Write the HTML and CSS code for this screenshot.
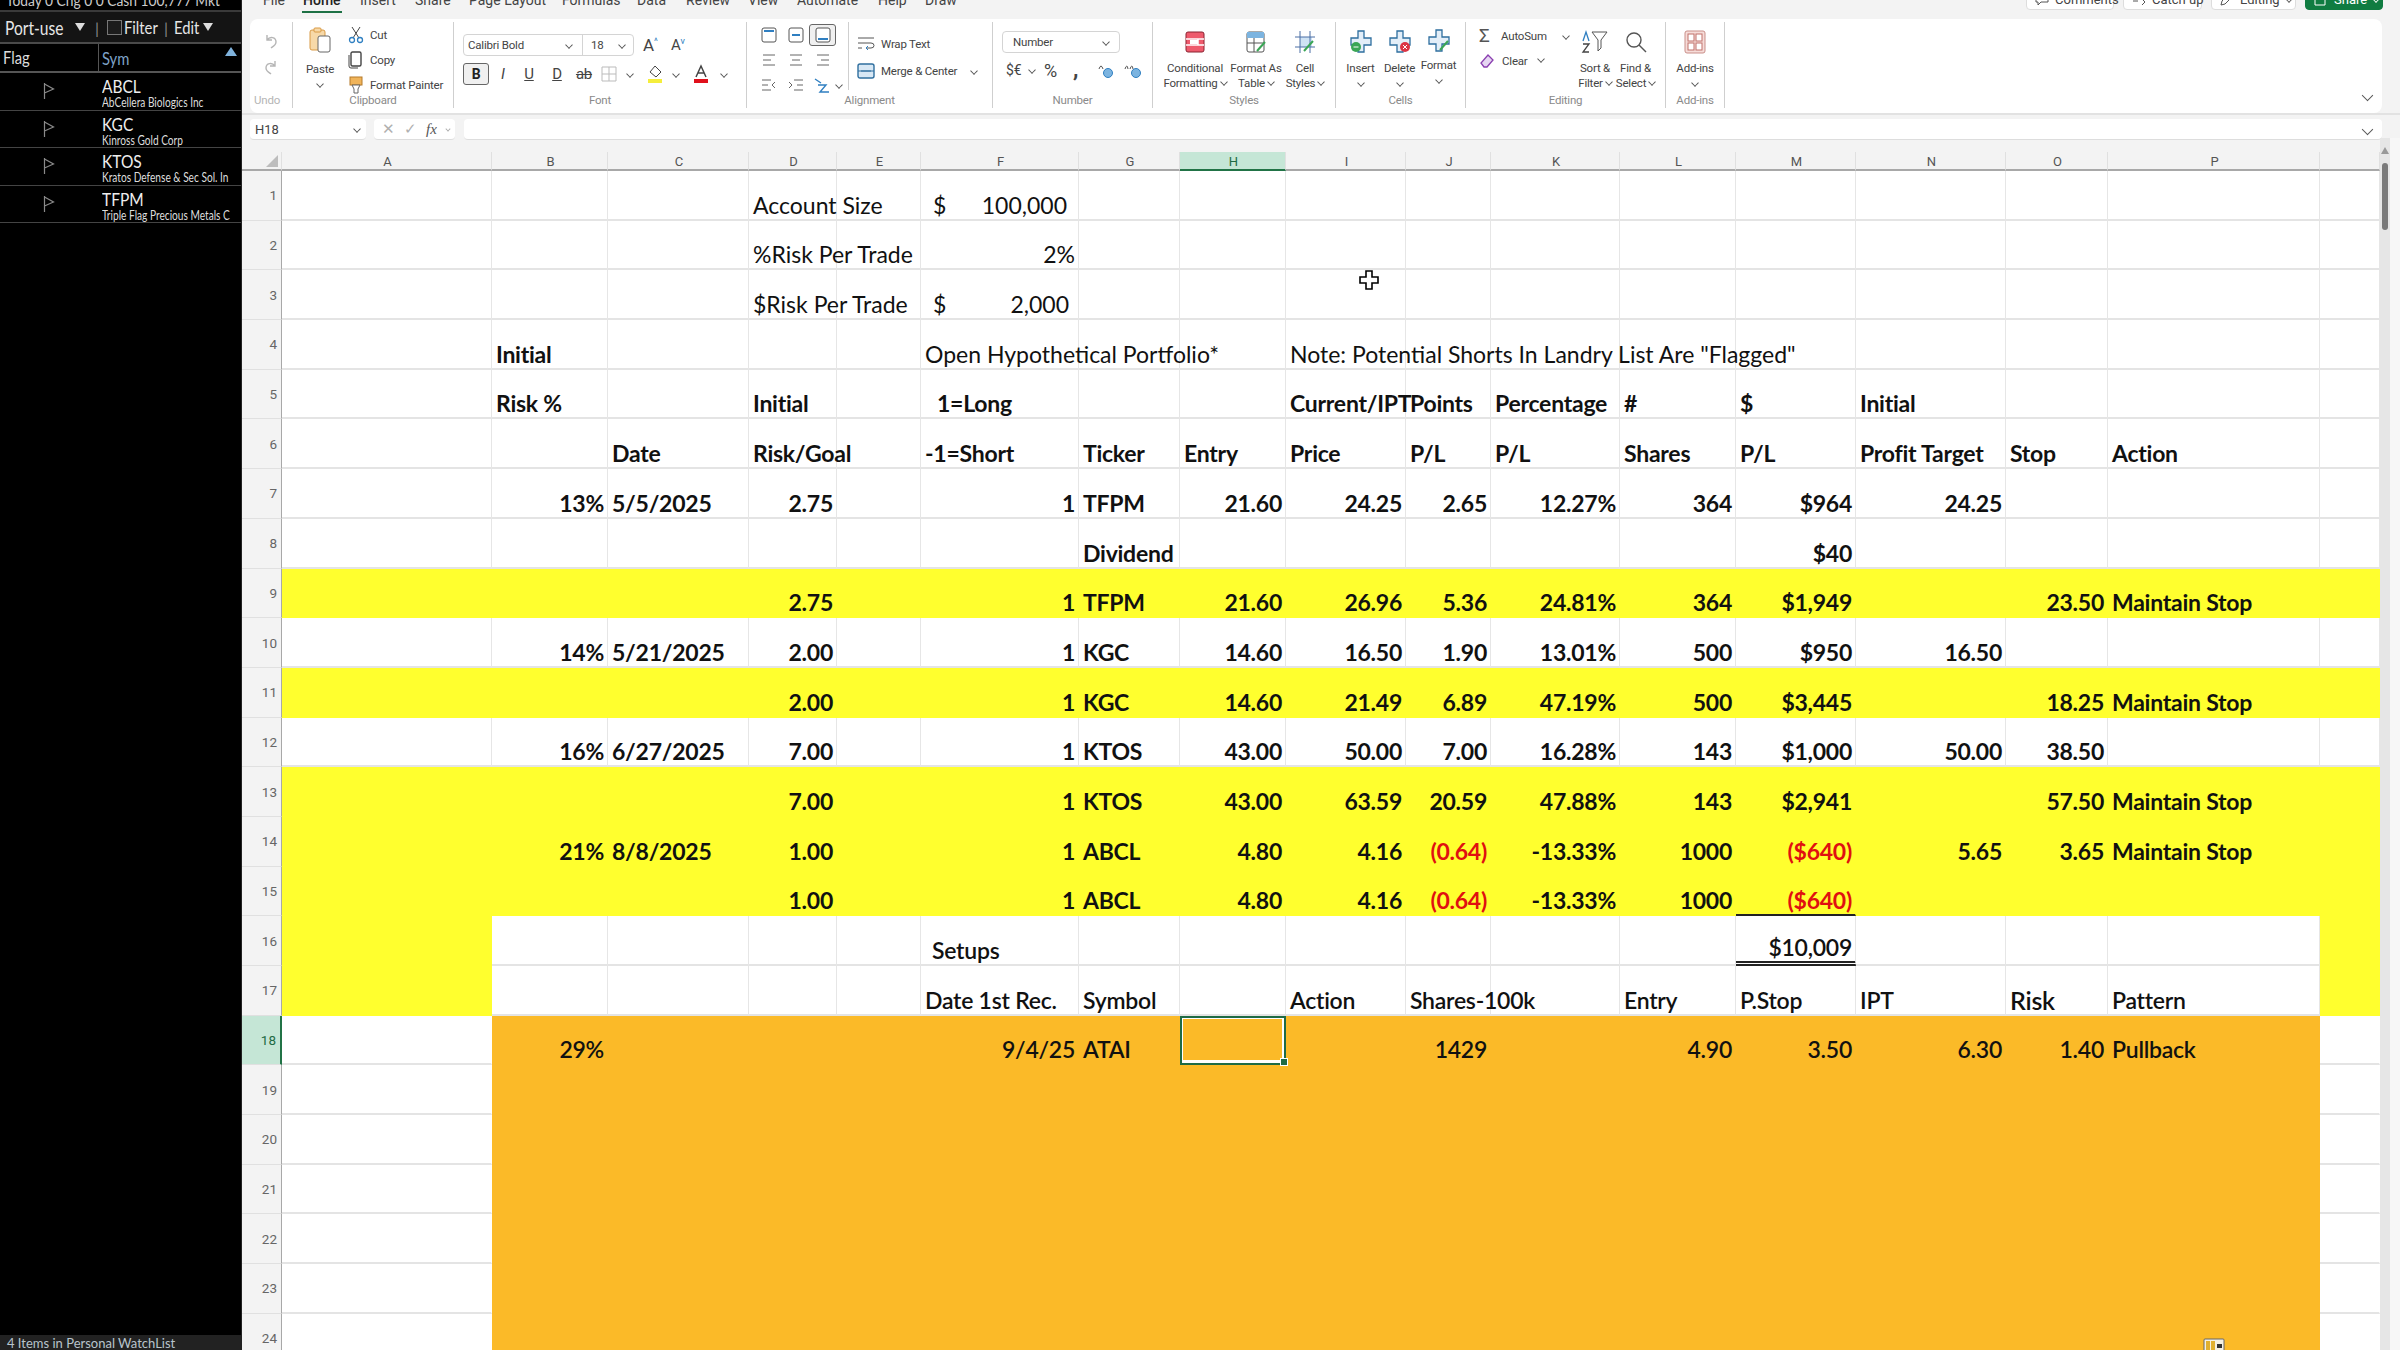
FILE: index.html
```html
<!DOCTYPE html>
<html lang="en">
<head>
    <meta charset="UTF-8">
    <title>Trading plan - Excel</title>
    <link rel="stylesheet" href="styles.css">
</head>
<body>
<div class="app">
    <!-- Watchlist -->
    <aside class="watch">
        <div class="watch-top"><span>Today 0 Chg 0 0 Cash 100,777 Mkt</span></div>
        <div class="watch-bar">
            <span class="wl-name"><span class="narrow">Port-use</span></span><i class="tri"></i>
            <span class="wl-sep">|</span>
            <i class="wl-check"></i><span class="wl-filter"><span class="narrow">Filter</span></span>
            <span class="wl-sep2">|</span>
            <span class="wl-edit"><span class="narrow">Edit</span></span><i class="tri"></i>
        </div>
        <div class="watch-head">
            <span class="wh-flag"><span class="narrow">Flag</span></span>
            <span class="wh-sym"><span class="narrow">Sym</span></span>
            <i class="sort-tri"></i>
        </div>
        <div class="watch-row">
            <div class="wr-flag"><svg width="12" height="18" viewBox="0 0 12 18"><path d="M1.5 1v16M1.5 2l9 5-9 4" fill="none" stroke="#8a8a8a" stroke-width="1.2"/></svg></div>
            <div class="wr-sym"><b>ABCL</b><small>AbCellera Biologics Inc</small></div>
        </div>
        <div class="watch-row">
            <div class="wr-flag"><svg width="12" height="18" viewBox="0 0 12 18"><path d="M1.5 1v16M1.5 2l9 5-9 4" fill="none" stroke="#8a8a8a" stroke-width="1.2"/></svg></div>
            <div class="wr-sym"><b>KGC</b><small>Kinross Gold Corp</small></div>
        </div>
        <div class="watch-row">
            <div class="wr-flag"><svg width="12" height="18" viewBox="0 0 12 18"><path d="M1.5 1v16M1.5 2l9 5-9 4" fill="none" stroke="#8a8a8a" stroke-width="1.2"/></svg></div>
            <div class="wr-sym"><b>KTOS</b><small>Kratos Defense &amp; Sec Sol. In</small></div>
        </div>
        <div class="watch-row">
            <div class="wr-flag"><svg width="12" height="18" viewBox="0 0 12 18"><path d="M1.5 1v16M1.5 2l9 5-9 4" fill="none" stroke="#8a8a8a" stroke-width="1.2"/></svg></div>
            <div class="wr-sym"><b>TFPM</b><small>Triple Flag Precious Metals C</small></div>
        </div>
        <div class="watch-status">4 Items in Personal WatchList</div>
    </aside>

    <main class="excel">
        <!-- Tabs -->
        <div class="tabs">
            <span class="tab t-file">File</span>
            <span class="tab t-home">Home</span>
            <span class="tab t-insert">Insert</span>
            <span class="tab t-share">Share</span>
            <span class="tab t-page">Page Layout</span>
            <span class="tab t-form">Formulas</span>
            <span class="tab t-data">Data</span>
            <span class="tab t-rev">Review</span>
            <span class="tab t-view">View</span>
            <span class="tab t-auto">Automate</span>
            <span class="tab t-help">Help</span>
            <span class="tab t-draw">Draw</span>
            <div class="top-btns">
                <span class="tbtn b-comments"><svg width="14" height="14" viewBox="0 0 14 14"><path d="M1 1h12v9H6l-3 3v-3H1z" fill="none" stroke="#555"/></svg>Comments</span>
                <span class="tbtn b-catch"><svg width="14" height="14" viewBox="0 0 14 14"><path d="M1 5h8M1 9h5M10 7l3 3-3 3" fill="none" stroke="#555"/></svg>Catch up</span>
                <span class="tbtn b-edit"><svg width="14" height="14" viewBox="0 0 14 14"><path d="M1 13l1-4 8-8 3 3-8 8z" fill="none" stroke="#555"/></svg>Editing<i class="chev"></i></span>
                <span class="tbtn b-share"><svg width="14" height="14" viewBox="0 0 14 14"><path d="M6 3H1v10h10V8M7 8l6-6M9 2h4v4" fill="none" stroke="#fff"/></svg>Share<i class="chev"></i></span>
            </div>
        </div>

        <!-- Ribbon -->
        <div class="ribbon">
            <section class="grp g-undo">
                <div class="grp-body undo-col">
                    <svg width="18" height="18" viewBox="0 0 18 18"><path d="M5 3v5h5M5 8c3-4 9-3 9 2 0 3-2 4-5 6" fill="none" stroke="#b5b5b5" stroke-width="1.4"/></svg>
                    <svg width="18" height="18" viewBox="0 0 18 18"><path d="M13 3v5H8M13 8c-3-4-9-3-9 2 0 3 2 4 5 6" fill="none" stroke="#b5b5b5" stroke-width="1.4"/></svg>
                </div>
                <div class="grp-label">Undo</div>
            </section>

            <section class="grp g-clip">
                <div class="grp-body clip-body">
                    <div class="tool paste">
                        <svg width="22" height="26" viewBox="0 0 22 26"><rect x="1" y="3" width="15" height="20" rx="2" fill="#f7d9a8" stroke="#d99a45"/><rect x="5" y="1" width="7" height="4" rx="1" fill="#f7d9a8" stroke="#d99a45"/><rect x="9" y="9" width="12" height="16" rx="2" fill="#fff" stroke="#666"/></svg>
                        <span class="tool-txt">Paste</span>
                        <i class="chev"></i>
                    </div>
                    <div class="clip-list">
                        <div class="line"><svg width="16" height="18" viewBox="0 0 16 18"><path d="M4 1l7 11M12 1L5 12" stroke="#444" fill="none"/><circle cx="4" cy="14" r="2.5" fill="none" stroke="#2f7fc1" stroke-width="1.3"/><circle cx="12" cy="14" r="2.5" fill="none" stroke="#2f7fc1" stroke-width="1.3"/></svg><span>Cut</span></div>
                        <div class="line"><svg width="16" height="18" viewBox="0 0 16 18"><rect x="3" y="1" width="10" height="14" rx="1.5" fill="#fff" stroke="#444" stroke-width="1.4"/><path d="M1 4v11q0 2 2 2h7" fill="none" stroke="#444"/></svg><span>Copy</span></div>
                        <div class="line"><svg width="16" height="18" viewBox="0 0 16 18"><rect x="2" y="1" width="12" height="8" fill="#f0b45a" stroke="#b57a2a"/><path d="M4 9h8l-2 4v4H6v-4z" fill="#fff" stroke="#666"/></svg><span>Format Painter</span></div>
                    </div>
                </div>
                <div class="grp-label">Clipboard</div>
            </section>

            <section class="grp g-font">
                <div class="grp-body font-body">
                    <div class="font-row1">
                        <div class="combo font-combo"><span class="font-name">Calibri Bold</span><i class="chev"></i><span class="font-sep"></span><span class="font-size">18</span><i class="chev"></i></div>
                        <span class="grow-a">A<sup>^</sup></span>
                        <span class="shrink-a">A<sup>v</sup></span>
                    </div>
                    <div class="font-row2">
                        <span class="fmt-btn"><b>B</b></span>
                        <span class="fmt f-i"><i>I</i></span>
                        <span class="fmt f-u"><u>U</u></span>
                        <span class="fmt f-d"><u>D</u></span>
                        <span class="fmt f-s"><s>ab</s></span>
                        <svg class="f-b" width="18" height="18" viewBox="0 0 18 18"><path d="M2 2h14v14H2zM9 2v14M2 9h14" fill="none" stroke="#bbb"/></svg>
                        <i class="chev f-c1"></i>
                        <svg class="f-fill" width="18" height="20" viewBox="0 0 18 20"><path d="M9 2l6 6-5 5-6-5z" fill="#fff" stroke="#444"/><rect x="2" y="15" width="14" height="4" fill="#f5ee3c"/></svg>
                        <i class="chev f-c2"></i>
                        <svg class="f-color" width="18" height="20" viewBox="0 0 18 20"><path d="M4 13L9 2l5 11M6 9h6" fill="none" stroke="#444" stroke-width="1.5"/><rect x="2" y="15" width="14" height="4" fill="#e0101c"/></svg>
                        <i class="chev f-c3"></i>
                    </div>
                </div>
                <div class="grp-label">Font</div>
            </section>

            <section class="grp g-align">
                <div class="grp-body align-body">
                    <div class="align-grid">
                        <span class="ai"><svg width="18" height="18" viewBox="0 0 18 18"><rect x="2" y="2" width="14" height="14" rx="2" fill="#fff" stroke="#555"/><path d="M4 5h10" stroke="#2f7fc1" stroke-width="2"/></svg></span>
                        <span class="ai"><svg width="18" height="18" viewBox="0 0 18 18"><rect x="2" y="2" width="14" height="14" rx="2" fill="#fff" stroke="#555"/><path d="M5 9h8" stroke="#2f7fc1" stroke-width="2"/></svg></span>
                        <span class="ai ai-on"><svg width="18" height="18" viewBox="0 0 18 18"><rect x="2" y="2" width="14" height="14" rx="2" fill="#fff" stroke="#555"/><path d="M4 13h10" stroke="#2f7fc1" stroke-width="2"/></svg></span>
                        <span class="ai"><svg width="16" height="14" viewBox="0 0 16 14"><path d="M2 2h12M2 7h8M2 12h12" stroke="#666"/></svg></span>
                        <span class="ai"><svg width="16" height="14" viewBox="0 0 16 14"><path d="M2 2h12M4 7h8M2 12h12" stroke="#666"/></svg></span>
                        <span class="ai"><svg width="16" height="14" viewBox="0 0 16 14"><path d="M2 2h12M6 7h8M2 12h12" stroke="#666"/></svg></span>
                        <span class="ai"><svg width="16" height="14" viewBox="0 0 16 14"><path d="M1 2h9M1 7h6M1 12h9M14 4l-3 3 3 3" fill="none" stroke="#666"/></svg></span>
                        <span class="ai"><svg width="16" height="14" viewBox="0 0 16 14"><path d="M6 2h9M9 7h6M6 12h9M1 4l3 3-3 3" fill="none" stroke="#666"/></svg></span>
                        <span class="ai ai-ori"><svg width="18" height="18" viewBox="0 0 18 18"><path d="M2 3l6 4M5 9l8 0-6 7h9" fill="none" stroke="#2f7fc1" stroke-width="1.4"/></svg><i class="chev"></i></span>
                    </div>
                    <div class="align-wrap">
                        <div class="line"><svg width="18" height="16" viewBox="0 0 18 16"><path d="M1 2h16M1 7h13q3 0 3 2.5T14 12H9M1 12h4" fill="none" stroke="#555"/><path d="M11 10l-2 2 2 2" fill="none" stroke="#2f7fc1"/></svg><span>Wrap Text</span></div>
                        <div class="line"><svg width="18" height="18" viewBox="0 0 18 18"><rect x="1" y="2" width="16" height="14" rx="2" fill="#d8e8f5" stroke="#2f6f9f" stroke-width="1.4"/><path d="M1 9h16M4 9h10" stroke="#2f6f9f"/></svg><span>Merge &amp; Center</span><i class="chev merge-chev"></i></div>
                    </div>
                </div>
                <div class="grp-label">Alignment</div>
            </section>

            <section class="grp g-num">
                <div class="grp-body num-body">
                    <div class="combo num-combo"><span>Number</span><i class="chev"></i></div>
                    <div class="num-row">
                        <span class="n-cur">$€</span><i class="chev n-ch"></i>
                        <span class="n-pct">%</span>
                        <span class="n-com">,</span>
                        <svg class="n-inc" width="18" height="18" viewBox="0 0 18 18"><path d="M2 8q2-6 4 0" fill="none" stroke="#555"/><circle cx="11" cy="12" r="4.5" fill="#7cb4e0" stroke="#2f7fc1"/></svg>
                        <svg class="n-dec" width="18" height="18" viewBox="0 0 18 18"><path d="M1 8q2-6 3 0M6 8q2-6 3 0" fill="none" stroke="#555"/><circle cx="12" cy="12" r="4.5" fill="#7cb4e0" stroke="#2f7fc1"/></svg>
                    </div>
                </div>
                <div class="grp-label">Number</div>
            </section>

            <section class="grp g-styles">
                <div class="grp-body tools">
                    <div class="tool w-cond">
                        <svg width="22" height="24" viewBox="0 0 22 24"><rect x="2" y="2" width="18" height="20" rx="2" fill="#ee5a6c" stroke="#8a2230"/><path d="M2 9h18M2 15h18M14 9v6" stroke="#fff" stroke-width="1.5"/><rect x="6" y="10" width="8" height="4" fill="#fff"/></svg>
                        <span class="tool-txt">Conditional</span>
                        <span class="tool-txt">Formatting<i class="chev in"></i></span>
                    </div>
                    <div class="tool w-fat">
                        <svg width="22" height="24" viewBox="0 0 22 24"><rect x="2" y="2" width="17" height="20" rx="2" fill="#fff" stroke="#555"/><rect x="2" y="2" width="17" height="6" fill="#7cb4e0"/><path d="M2 13h17M9 8v14" stroke="#555"/><path d="M12 21l8-9" stroke="#3aa655" stroke-width="2"/></svg>
                        <span class="tool-txt">Format As</span>
                        <span class="tool-txt">Table<i class="chev in"></i></span>
                    </div>
                    <div class="tool w-cell">
                        <svg width="22" height="24" viewBox="0 0 22 24"><rect x="6" y="7" width="12" height="10" fill="#cfe3f4"/><path d="M6 1v22M16 1v22M1 7h20M1 17h20" stroke="#4a6fa5" fill="none"/><path d="M10 21l9-10" stroke="#3aa655" stroke-width="2"/></svg>
                        <span class="tool-txt">Cell</span>
                        <span class="tool-txt">Styles<i class="chev in"></i></span>
                    </div>
                </div>
                <div class="grp-label">Styles</div>
            </section>

            <section class="grp g-cells">
                <div class="grp-body tools">
                    <div class="tool w-c">
                        <svg width="24" height="24" viewBox="0 0 24 24"><path d="M9 1h6v7h7v7h-7v7H9v-7H2V8h7z" fill="#e3eef8" stroke="#2f6f9f" stroke-width="1.3"/><circle cx="7" cy="17" r="5" fill="#3aa655"/><path d="M4.5 17h5" stroke="#fff"/></svg>
                        <span class="tool-txt">Insert</span>
                        <i class="chev"></i>
                    </div>
                    <div class="tool w-c">
                        <svg width="24" height="24" viewBox="0 0 24 24"><path d="M9 1h6v7h7v7h-7v7H9v-7H2V8h7z" fill="#e3eef8" stroke="#2f6f9f" stroke-width="1.3"/><circle cx="17" cy="17" r="5" fill="#dc3545"/><path d="M15 15l4 4M19 15l-4 4" stroke="#fff"/></svg>
                        <span class="tool-txt">Delete</span>
                        <i class="chev"></i>
                    </div>
                    <div class="tool w-c tool-up">
                        <svg width="24" height="24" viewBox="0 0 24 24"><path d="M9 1h6v7h7v7h-7v7H9v-7H2V8h7z" fill="#e3eef8" stroke="#2f6f9f" stroke-width="1.3"/><path d="M13 21l8-9" stroke="#3aa655" stroke-width="2"/></svg>
                        <span class="tool-txt">Format</span>
                        <i class="chev"></i>
                    </div>
                </div>
                <div class="grp-label">Cells</div>
            </section>

            <section class="grp g-edit">
                <div class="grp-body tools">
                    <div class="edit-list">
                        <div class="line"><span class="sigma">Σ</span><span>AutoSum</span><i class="chev sum-chev"></i></div>
                        <div class="line"><svg width="16" height="16" viewBox="0 0 16 16"><path d="M9 2l5 5-6 7H5L2 10z" fill="#e6d6f2" stroke="#8a3fb0" stroke-width="1.3"/></svg><span>Clear</span><i class="chev in"></i></div>
                    </div>
                    <div class="tool w-sort">
                        <svg width="28" height="24" viewBox="0 0 28 24"><path d="M11 2h15l-6 8v8l-3 3v-11z" fill="#fff" stroke="#555"/><path d="M2 11l3-9 3 9" fill="none" stroke="#2f7fc1" stroke-width="1.3"/><path d="M2 14h6l-6 8h6" fill="none" stroke="#444" stroke-width="1.3"/></svg>
                        <span class="tool-txt">Sort &amp;</span>
                        <span class="tool-txt">Filter<i class="chev in"></i></span>
                    </div>
                    <div class="tool w-find">
                        <svg width="24" height="24" viewBox="0 0 24 24"><circle cx="10" cy="10" r="7" fill="none" stroke="#555" stroke-width="1.4"/><path d="M15 15l7 7" stroke="#555" stroke-width="1.4"/></svg>
                        <span class="tool-txt">Find &amp;</span>
                        <span class="tool-txt">Select<i class="chev in"></i></span>
                    </div>
                </div>
                <div class="grp-label">Editing</div>
            </section>

            <section class="grp g-add">
                <div class="grp-body tools">
                    <div class="tool w-add">
                        <svg width="22" height="24" viewBox="0 0 22 24"><rect x="1" y="1" width="20" height="22" rx="2" fill="#f6dcd9" stroke="#c98f89"/><rect x="4" y="4" width="6" height="7" fill="#fff" stroke="#c0706a"/><rect x="12" y="4" width="6" height="7" fill="#fff" stroke="#c0706a"/><rect x="4" y="13" width="6" height="7" fill="#fff" stroke="#c0706a"/><rect x="12" y="13" width="6" height="7" fill="#fff" stroke="#c0706a"/></svg>
                        <span class="tool-txt">Add-ins</span>
                        <i class="chev"></i>
                    </div>
                </div>
                <div class="grp-label">Add-ins</div>
            </section>

            <div class="ribbon-end"><i class="chev big"></i></div>
        </div>

        <!-- Formula bar -->
        <div class="formula">
            <div class="name-box"><span>H18</span><i class="chev"></i></div>
            <div class="fx-box"><span class="fx-x">✕</span><span class="fx-ok">✓</span><span class="fx-f"><i>fx</i></span><i class="chev tiny"></i></div>
            <div class="fx-input"><i class="chev big"></i></div>
        </div>

        <!-- Sheet -->
        <div class="sheet">
            <div class="grid-wrap">
                <table class="grid">
                    <colgroup>
                        <col class="c-rh"><col class="c-a"><col class="c-b"><col class="c-c"><col class="c-d"><col class="c-e"><col class="c-f"><col class="c-g"><col class="c-h"><col class="c-i"><col class="c-j"><col class="c-k"><col class="c-l"><col class="c-m"><col class="c-n"><col class="c-o"><col class="c-p"><col class="c-q">
                    </colgroup>
                    <thead>
                        <tr><th class="corner"><i></i></th><th>A</th><th>B</th><th>C</th><th>D</th><th>E</th><th>F</th><th>G</th><th class="on">H</th><th>I</th><th>J</th><th>K</th><th>L</th><th>M</th><th>N</th><th>O</th><th>P</th><th></th></tr>
                    </thead>
                    <tbody>
                        <tr class="reg"><th>1</th><td></td><td></td><td></td><td>Account Size</td><td></td><td class="r acct"><span class="cur">$</span>100,000</td><td></td><td></td><td></td><td></td><td></td><td></td><td></td><td></td><td></td><td></td><td></td></tr>
                        <tr class="reg"><th>2</th><td></td><td></td><td></td><td>%Risk Per Trade</td><td></td><td class="r">2%</td><td></td><td></td><td></td><td></td><td></td><td></td><td></td><td></td><td></td><td></td><td></td></tr>
                        <tr class="reg"><th>3</th><td></td><td></td><td></td><td>$Risk Per Trade</td><td></td><td class="r acct2"><span class="cur">$</span>2,000</td><td></td><td></td><td></td><td></td><td></td><td></td><td></td><td></td><td></td><td></td><td></td></tr>
                        <tr><th>4</th><td></td><td>Initial</td><td></td><td></td><td></td><td class="n">Open Hypothetical Portfolio*</td><td></td><td></td><td class="n">Note: Potential Shorts In Landry List Are "Flagged"</td><td></td><td></td><td></td><td></td><td></td><td></td><td></td><td></td></tr>
                        <tr><th>5</th><td></td><td>Risk %</td><td></td><td>Initial</td><td></td><td class="ind">1=Long</td><td></td><td></td><td>Current/IPT</td><td>Points</td><td>Percentage</td><td>#</td><td>$</td><td>Initial</td><td></td><td></td><td></td></tr>
                        <tr><th>6</th><td></td><td></td><td>Date</td><td>Risk/Goal</td><td></td><td>-1=Short</td><td>Ticker</td><td>Entry</td><td>Price</td><td>P/L</td><td>P/L</td><td>Shares</td><td>P/L</td><td>Profit Target</td><td>Stop</td><td>Action</td><td></td></tr>
                        <tr><th>7</th><td></td><td class="r">13%</td><td>5/5/2025</td><td class="r">2.75</td><td></td><td class="r">1</td><td>TFPM</td><td class="r">21.60</td><td class="r">24.25</td><td class="r">2.65</td><td class="r">12.27%</td><td class="r">364</td><td class="r">$964</td><td class="r">24.25</td><td></td><td></td><td></td></tr>
                        <tr><th>8</th><td></td><td></td><td></td><td></td><td></td><td></td><td>Dividend</td><td></td><td></td><td></td><td></td><td></td><td class="r">$40</td><td></td><td></td><td></td><td></td></tr>
                        <tr class="yl"><th>9</th><td></td><td></td><td></td><td class="r">2.75</td><td></td><td class="r">1</td><td>TFPM</td><td class="r">21.60</td><td class="r">26.96</td><td class="r">5.36</td><td class="r">24.81%</td><td class="r">364</td><td class="r">$1,949</td><td></td><td class="r">23.50</td><td>Maintain Stop</td><td></td></tr>
                        <tr><th>10</th><td></td><td class="r">14%</td><td>5/21/2025</td><td class="r">2.00</td><td></td><td class="r">1</td><td>KGC</td><td class="r">14.60</td><td class="r">16.50</td><td class="r">1.90</td><td class="r">13.01%</td><td class="r">500</td><td class="r">$950</td><td class="r">16.50</td><td></td><td></td><td></td></tr>
                        <tr class="yl"><th>11</th><td></td><td></td><td></td><td class="r">2.00</td><td></td><td class="r">1</td><td>KGC</td><td class="r">14.60</td><td class="r">21.49</td><td class="r">6.89</td><td class="r">47.19%</td><td class="r">500</td><td class="r">$3,445</td><td></td><td class="r">18.25</td><td>Maintain Stop</td><td></td></tr>
                        <tr><th>12</th><td></td><td class="r">16%</td><td>6/27/2025</td><td class="r">7.00</td><td></td><td class="r">1</td><td>KTOS</td><td class="r">43.00</td><td class="r">50.00</td><td class="r">7.00</td><td class="r">16.28%</td><td class="r">143</td><td class="r">$1,000</td><td class="r">50.00</td><td class="r">38.50</td><td></td><td></td></tr>
                        <tr class="yl"><th>13</th><td></td><td></td><td></td><td class="r">7.00</td><td></td><td class="r">1</td><td>KTOS</td><td class="r">43.00</td><td class="r">63.59</td><td class="r">20.59</td><td class="r">47.88%</td><td class="r">143</td><td class="r">$2,941</td><td></td><td class="r">57.50</td><td>Maintain Stop</td><td></td></tr>
                        <tr class="yl"><th>14</th><td></td><td class="r">21%</td><td>8/8/2025</td><td class="r">1.00</td><td></td><td class="r">1</td><td>ABCL</td><td class="r">4.80</td><td class="r">4.16</td><td class="r red">(0.64)</td><td class="r">-13.33%</td><td class="r">1000</td><td class="r red">($640)</td><td class="r">5.65</td><td class="r">3.65</td><td>Maintain Stop</td><td></td></tr>
                        <tr class="yl"><th>15</th><td></td><td></td><td></td><td class="r">1.00</td><td></td><td class="r">1</td><td>ABCL</td><td class="r">4.80</td><td class="r">4.16</td><td class="r red">(0.64)</td><td class="r">-13.33%</td><td class="r">1000</td><td class="r red line-b">($640)</td><td></td><td></td><td></td><td></td></tr>
                        <tr class="setup"><th>16</th><td class="fy"></td><td></td><td></td><td></td><td></td><td class="ind2">Setups</td><td></td><td></td><td></td><td></td><td></td><td></td><td class="r dbl-b">$10,009</td><td></td><td></td><td></td><td class="fy"></td></tr>
                        <tr class="setup"><th>17</th><td class="fy"></td><td></td><td></td><td></td><td></td><td>Date 1st Rec.</td><td>Symbol</td><td></td><td>Action</td><td>Shares-100k</td><td></td><td>Entry</td><td>P.Stop</td><td>IPT</td><td class="big-t">Risk</td><td>Pattern</td><td class="fy"></td></tr>
                        <tr class="or setup"><th class="on">18</th><td></td><td class="r">29%</td><td></td><td></td><td></td><td class="r">9/4/25</td><td>ATAI</td><td class="sel"></td><td></td><td class="r">1429</td><td></td><td class="r">4.90</td><td class="r">3.50</td><td class="r">6.30</td><td class="r">1.40</td><td>Pullback</td><td></td></tr>
                        <tr class="or"><th>19</th><td></td><td></td><td></td><td></td><td></td><td></td><td></td><td></td><td></td><td></td><td></td><td></td><td></td><td></td><td></td><td></td><td></td></tr>
                        <tr class="or"><th>20</th><td></td><td></td><td></td><td></td><td></td><td></td><td></td><td></td><td></td><td></td><td></td><td></td><td></td><td></td><td></td><td></td><td></td></tr>
                        <tr class="or"><th>21</th><td></td><td></td><td></td><td></td><td></td><td></td><td></td><td></td><td></td><td></td><td></td><td></td><td></td><td></td><td></td><td></td><td></td></tr>
                        <tr class="or"><th>22</th><td></td><td></td><td></td><td></td><td></td><td></td><td></td><td></td><td></td><td></td><td></td><td></td><td></td><td></td><td></td><td></td><td></td></tr>
                        <tr class="or"><th>23</th><td></td><td></td><td></td><td></td><td></td><td></td><td></td><td></td><td></td><td></td><td></td><td></td><td></td><td></td><td></td><td></td><td></td></tr>
                        <tr class="or"><th>24</th><td></td><td></td><td></td><td></td><td></td><td></td><td></td><td></td><td></td><td></td><td></td><td></td><td></td><td></td><td></td><td></td><td></td></tr>
                    </tbody>
                </table>
                <!-- mouse pointer and the quick analysis tag lie over the grid -->
                <svg class="pointer" width="22" height="22" viewBox="0 0 22 22"><path d="M8 2h6v6h6v6h-6v6H8v-6H2V8h6z" fill="#fff" stroke="#000" stroke-width="1.6"/></svg>
                <svg class="quick" width="22" height="14" viewBox="0 0 22 14"><rect x="1" y="1" width="20" height="14" rx="1" fill="#f4f0e2" stroke="#666"/><rect x="3" y="3" width="4" height="11" fill="#e0b030"/><rect x="8" y="3" width="4" height="11" fill="#e0b030"/><rect x="14" y="6" width="5" height="4" fill="#333"/></svg>
            </div>
            <div class="vscroll"><i class="up"></i><i class="thumb"></i></div>
        </div>
    </main>
</div>
</body>
</html>
```

FILE: styles.css
```css
/* Reset */
* {
    margin: 0;
    padding: 0;
    box-sizing: border-box;
}

html, body {
    width: 2400px;
    height: 1350px;
    overflow: hidden;
    background: #000;
}

body {
    font-family: 'Roboto', 'Liberation Sans', sans-serif;
    color: #444;
}

.app {
    display: flex;
    height: 1350px;
}

/* Watchlist panel */
.watch {
    width: 242px;
    height: 1350px;
    flex: none;
    background: #000;
    color: #ddd;
    display: flex;
    flex-direction: column;
    font-family: 'Lato', sans-serif;
    border-right: 1px solid #222;
}

/* the trading app draws its text tall and narrow */
.narrow {
    display: inline-block;
    white-space: nowrap;
    transform: scaleX(.82);
    transform-origin: left center;
}

.watch-top {
    height: 10px;
    font-size: 15px;
    line-height: 0;
    padding-left: 6px;
    white-space: nowrap;
    overflow: hidden;
    color: #ccc;
}

.watch-top span {
    display: inline-block;
    transform: scaleX(.92);
    transform-origin: left center;
}

.watch-bar {
    height: 34px;
    display: flex;
    align-items: center;
    background: #141414;
    border-top: 2px solid #3a3a3a;
    border-bottom: 2px solid #4a4a4a;
    padding-left: 5px;
    font-size: 19px;
    color: #e6e6e6;
}

.wl-name { width: 70px; flex: none; }
.tri {
    width: 0;
    height: 0;
    flex: none;
    border-left: 5px solid transparent;
    border-right: 5px solid transparent;
    border-top: 8px solid #ddd;
}

.wl-sep { margin-left: 10px; color: #888; font-size: 16px; }
.wl-check {
    width: 15px;
    height: 15px;
    flex: none;
    border: 1px solid #777;
    background: #1c1c1c;
    margin-left: 8px;
}
.wl-filter { margin-left: 2px; font-size: 18px; width: 36px; flex: none; }
.wl-sep2 { margin-left: 4px; color: #888; font-size: 16px; }
.wl-edit { margin-left: 6px; width: 29px; font-size: 18px; flex: none; }

.watch-head {
    height: 29px;
    display: flex;
    align-items: center;
    position: relative;
    border-bottom: 2px solid #555;
    font-size: 18px;
}

.wh-flag { width: 99px; flex: none; padding-left: 3px; height: 100%; line-height: 27px; border-right: 1px solid #555; }
.wh-sym { padding-left: 3px; color: #7fa3c8; }

.sort-tri {
    position: absolute;
    right: 4px;
    top: 3px;
    width: 0;
    height: 0;
    border-left: 6px solid transparent;
    border-right: 6px solid transparent;
    border-bottom: 9px solid #7fb2dc;
}

.watch-row {
    height: 37.5px;
    display: flex;
    border-bottom: 1px solid #444;
    flex: none;
}

.wr-flag { width: 99px; flex: none; padding: 9px 0 0 43px; }

.wr-sym {
    padding-left: 3px;
    display: flex;
    flex-direction: column;
    align-items: flex-start;
    white-space: nowrap;
}

.wr-sym b {
    font-weight: 400;
    font-size: 18px;
    line-height: 20px;
    margin-top: 3px;
    color: #eee;
    transform: scaleX(.86);
    transform-origin: left center;
}

.wr-sym small {
    font-size: 13px;
    line-height: 12px;
    color: #ddd;
    transform: scaleX(.78);
    transform-origin: left center;
}

.watch-status {
    margin-top: auto;
    height: 15px;
    background: #222;
    font-size: 13px;
    line-height: 16px;
    padding-left: 7px;
    color: #b8c4cc;
}

/* Excel */
.excel {
    flex: 1;
    min-width: 0;
    background: #f3f3f3;
    display: flex;
    flex-direction: column;
}

.tabs {
    height: 19px;
    flex: none;
    position: relative;
    overflow: hidden;
    font-size: 14px;
    color: #444;
}

.tab {
    position: absolute;
    top: -9px;
    line-height: 18px;
    white-space: nowrap;
}

.t-file { left: 21px; }
.t-home { left: 61px; color: #222; font-weight: 500; }
.t-home::after {
    content: "";
    position: absolute;
    left: -1px;
    right: -1px;
    top: 20px;
    height: 2px;
    background: #1e7145;
}
.t-insert { left: 118px; }
.t-share { left: 173px; }
.t-page { left: 227px; }
.t-form { left: 320px; }
.t-data { left: 395px; }
.t-rev { left: 444px; }
.t-view { left: 506px; }
.t-auto { left: 555px; }
.t-help { left: 636px; }
.t-draw { left: 683px; }

.top-btns {
    position: absolute;
    top: -12px;
    left: 1784px;
    display: flex;
    gap: 9px;
}

.tbtn {
    height: 22px;
    background: #fff;
    border: 1px solid #ddd;
    border-radius: 4px;
    display: flex;
    align-items: center;
    gap: 6px;
    padding-left: 8px;
    font-size: 13px;
    white-space: nowrap;
}
.tbtn svg { flex: none; }
.b-comments { width: 88px; }
.b-catch { width: 79px; }
.b-edit { width: 85px; }
.b-share { width: 78px; background: #107c41; border-color: #107c41; color: #fff; }
.b-share .chev { border-color: #fff; }

.ribbon {
    height: 94px;
    flex: none;
    margin: 0 18px 0 8px;
    background: #fff;
    border-radius: 8px;
    display: flex;
    padding-top: 3px;
    font-size: 11.5px;
    letter-spacing: -.2px;
    color: #444;
}

.grp {
    flex: none;
    height: 86px;
    border-right: 1px solid #cfcfcf;
    display: flex;
    flex-direction: column;
}

.grp-body { height: 71px; flex: none; }

.grp-label {
    text-align: center;
    font-size: 11.5px;
    line-height: 15px;
    color: #8a8a8a;
}

.g-undo { width: 43px; }
.g-clip { width: 161px; }
.g-font { width: 293px; }
.g-align { width: 246px; }
.g-num { width: 160px; }
.g-styles { width: 183px; }
.g-cells { width: 130px; }
.g-edit { width: 200px; }
.g-add { width: 59px; }

.g-undo .grp-label { padding-right: 8px; color: #b5b5b5; }

.ribbon-end {
    flex: 1;
    display: flex;
    justify-content: flex-end;
    align-items: flex-end;
    padding: 0 10px 13px 0;
}

/* small chevrons built from borders */
.chev {
    display: inline-block;
    width: 6px;
    height: 6px;
    border-right: 1.4px solid #555;
    border-bottom: 1.4px solid #555;
    transform: rotate(45deg) scale(.9);
    flex: none;
}
.chev.in { margin-left: 3px; position: relative; top: -2px; }
.chev.big { width: 9px; height: 9px; }
.chev.tiny { width: 4px; height: 4px; border-color: #aaa; }

.undo-col {
    display: flex;
    flex-direction: column;
    align-items: center;
    gap: 8px;
    padding-top: 10px;
}

.tool {
    display: flex;
    flex-direction: column;
    align-items: center;
    white-space: nowrap;
}

.tool svg { height: 26px; margin-top: 7px; margin-bottom: 6px; }
.tool-txt { line-height: 15px; }
.tool > .chev { margin-top: 4px; }
.tool-up { margin-top: -1px; }
.tool-up .tool-txt { margin-top: -2px; }

.clip-body { display: flex; padding-left: 13px; }
.paste { width: 28px; margin-right: 14px; }
.paste svg { margin-bottom: 9px; margin-top: 5px; }

.line {
    display: flex;
    align-items: center;
    gap: 6px;
    height: 25px;
    white-space: nowrap;
}

.font-body { padding-left: 9px; }

.font-row1 {
    display: flex;
    align-items: center;
    height: 37px;
    padding-top: 8px;
}

.combo {
    height: 22px;
    background: #fff;
    border: 1px solid #d4d4d4;
    border-radius: 4px;
    display: flex;
    align-items: center;
}

.font-combo { width: 171px; padding-left: 4px; flex: none; }
.font-name { width: 98px; }
.font-sep { width: 1px; height: 20px; background: #d4d4d4; margin-left: 10px; }
.font-size { margin-left: 8px; width: 28px; }
.grow-a { margin-left: 9px; font-size: 17px; width: 28px; }
.shrink-a { font-size: 15px; }
.grow-a sup, .shrink-a sup { font-size: 9px; color: #2f7fc1; }

.font-row2 {
    display: flex;
    align-items: center;
    height: 26px;
    margin-top: 2px;
}

.fmt-btn {
    width: 26px;
    height: 22px;
    border: 1px solid #666;
    border-radius: 3px;
    background: #f0f0f0;
    text-align: center;
    line-height: 20px;
    font-size: 14px;
    color: #222;
}

.fmt { font-size: 15px; text-align: center; width: 20px; }
.f-i { margin-left: 4px; }
.f-u { margin-left: 6px; }
.f-d { margin-left: 8px; }
.f-s { margin-left: 7px; }
.f-b { margin-left: 6px; }
.f-c1 { margin-left: 9px; }
.f-fill { margin-left: 13px; }
.f-c2 { margin-left: 9px; }
.f-color { margin-left: 13px; }
.f-c3 { margin-left: 11px; }

.align-body { display: flex; }

.align-grid {
    width: 102px;
    height: 68px;
    display: grid;
    grid-template-columns: 27px 27px 27px;
    grid-auto-rows: 25px;
    padding-left: 8px;
    flex: none;
    border-right: 1px solid #cfcfcf;
    align-items: center;
}

.ai { display: flex; align-items: center; justify-content: center; height: 22px; }
.ai-on { border: 1px solid #666; border-radius: 3px; background: #f0f0f0; }
.ai-ori { gap: 5px; justify-content: flex-start; padding-left: 4px; width: 40px; }

.align-wrap { padding: 8px 0 0 8px; }
.align-wrap .line { height: 27px; }
.merge-chev { margin-left: 8px; }

.num-body { padding: 9px 0 0 9px; }
.num-combo { width: 118px; padding: 0 10px; justify-content: space-between; }

.num-row {
    display: flex;
    align-items: center;
    height: 30px;
    margin-top: 2px;
}

.n-cur { font-size: 14px; margin-left: 4px; width: 20px; }
.n-ch { margin-left: 3px; }
.n-pct { font-size: 18px; margin-left: 9px; }
.n-com { font-size: 22px; font-weight: 700; margin-left: 16px; width: 18px; line-height: 16px; }
.n-inc { margin-left: 6px; }
.n-dec { margin-left: 9px; }

.tools { display: flex; }
.g-styles .tools { padding-left: 3px; }
.w-cond { width: 78px; }
.w-fat { width: 44px; }
.w-cell { width: 54px; }
.g-cells .tools { padding-left: 5px; }
.w-c { width: 39px; }
.edit-list { width: 109px; padding: 1px 0 0 13px; }
.edit-list .line { gap: 7px; }
.sigma { font-size: 19px; color: #555; width: 15px; }
.sum-chev { margin-left: 9px; }
.w-sort { width: 40px; }
.w-find { width: 41px; }
.w-add { width: 58px; }

/* Formula bar */
.formula {
    height: 25px;
    flex: none;
    display: flex;
    padding: 4px 18px 0 8px;
    border-top: 2px solid #e2e2e2;
    font-size: 13px;
}

.name-box, .fx-box, .fx-input {
    background: #fff;
    border-radius: 4px;
    height: 21px;
    display: flex;
    align-items: center;
    border-bottom: 1px solid #ddd;
}

.name-box { width: 116px; padding: 0 6px 0 5px; justify-content: space-between; }
.fx-box { width: 81px; margin-left: 8px; padding-left: 8px; gap: 9px; color: #b0b0b0; font-size: 15px; }
.fx-f { color: #555; font-family: 'Liberation Serif', serif; }
.fx-input { flex: 1; margin-left: 9px; justify-content: flex-end; padding-right: 10px; }

/* Sheet */
.sheet {
    flex: 1;
    min-height: 0;
    display: flex;
    position: relative;
    overflow: hidden;
}

.grid-wrap {
    width: 2138px;
    flex: none;
    position: relative;
    overflow: hidden;
    padding-top: 14px;
}

.grid {
    width: 2138px;
    table-layout: fixed;
    border-collapse: separate;
    border-spacing: 0;
    background: #fff;
    font-family: 'Lato', 'Liberation Sans', sans-serif;
    font-size: 23px;
    font-weight: 700;
    color: #111;
}

.c-rh { width: 40px; }
.c-a { width: 210px; }
.c-b { width: 116px; }
.c-c { width: 141px; }
.c-d { width: 88px; }
.c-e { width: 84px; }
.c-f { width: 158px; }
.c-g { width: 101px; }
.c-h { width: 106px; }
.c-i { width: 120px; }
.c-j { width: 85px; }
.c-k { width: 129px; }
.c-l { width: 116px; }
.c-m { width: 120px; }
.c-n { width: 150px; }
.c-o { width: 102px; }
.c-p { width: 212px; }
.c-q { width: 60px; }

thead th {
    height: 19px;
    background: #f3f3f3;
    border-right: 1px solid #e0e0e0;
    border-bottom: 2px solid #a8a8a8;
    font-family: 'Roboto', sans-serif;
    font-size: 13px;
    font-weight: 400;
    color: #555;
    padding: 1px 0 0 2px;
}

thead th.on {
    background: #c5e6d6;
    border-bottom-color: #217346;
    color: #1f6b45;
}

.corner { position: relative; }
.corner i {
    position: absolute;
    right: 3px;
    bottom: 2px;
    width: 0;
    height: 0;
    border-left: 12px solid transparent;
    border-bottom: 12px solid #bdbdbd;
}

tbody tr { height: 49.7px; }

tbody th {
    background: #f3f3f3;
    border-right: 1px solid #a8a8a8;
    border-bottom: 1px solid #e0e0e0;
    font-family: 'Roboto', sans-serif;
    font-size: 13.5px;
    font-weight: 400;
    color: #666;
    text-align: right;
    padding: 0 4px 0 0;
}

tbody th.on {
    background: #c5e6d6;
    border-right: 2px solid #217346;
    color: #1f6b45;
}

td {
    border-right: 1px solid #e6e6e6;
    border-bottom: 2px solid #e4e4e4;
    padding: 0 3px 1px 4px;
    line-height: 26px;
    vertical-align: bottom;
    white-space: nowrap;
    letter-spacing: -.25px;
}

td.r { text-align: right; }
td.n, .reg td { font-weight: 400; letter-spacing: 0; }
td.ind { padding-left: 16px; }
td.ind2 { padding-left: 11px; }
td.red { color: #e01010; }

td.acct { padding-right: 11px; }
td.acct2 { padding-right: 9px; }
.cur { float: left; margin-left: 8px; }

tr.yl td { background: #ffff2e; border-color: transparent; }
td.fy { background: #ffff2e; border-color: transparent; }
tr.or td { background: #fbba28; border-color: transparent; }
tr.or td:first-of-type, tr.or td:last-child { background: #fff; border-bottom-color: #e4e4e4; }

.setup td { font-weight: 600; }
td.big-t { font-size: 25px; }

tr.yl td.line-b { border-bottom: 2px solid #222; }
td.dbl-b { border-bottom: 5px double #222; }

td.sel {
    position: relative;
    outline: 2px solid #1f6b45;
    outline-offset: -2px;
    box-shadow: inset 0 0 0 3px #fff;
}

td.sel::after {
    content: "";
    position: absolute;
    right: -3px;
    bottom: -3px;
    width: 6px;
    height: 6px;
    background: #1f6b45;
    border: 1px solid #fff;
}

.pointer {
    position: absolute;
    left: 1116px;
    top: 131px;
}

.quick {
    position: absolute;
    left: 1961px;
    top: 1200px;
}

/* Scrollbar */
.vscroll {
    flex: 1;
    position: relative;
    background: linear-gradient(90deg, #e6e6e6 0, #e6e6e6 10px, #f7f7f7 10px);
}

.vscroll .up {
    position: absolute;
    left: 1px;
    top: 9px;
    border-left: 4px solid transparent;
    border-right: 4px solid transparent;
    border-bottom: 7px solid #999;
}

.vscroll .thumb {
    position: absolute;
    left: 2px;
    top: 25px;
    width: 6px;
    height: 67px;
    border-radius: 3px;
    background: #7a7a7a;
}
```
